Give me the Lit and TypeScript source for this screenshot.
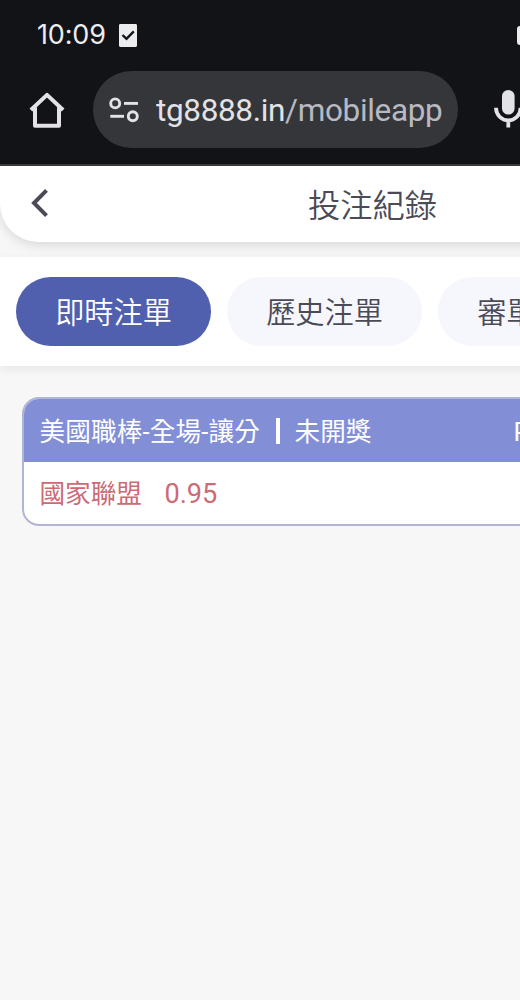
import { LitElement, html, css } from "lit";
import { customElement, state } from "lit/decorators.js";

const homeIcon = html`<svg width="36" height="36" viewBox="0 0 36 36" fill="none" stroke="#e3e3e7" stroke-width="4" stroke-linecap="round" stroke-linejoin="round">
  <path d="M1.9 18 18 2.9 34.1 18" stroke-linecap="butt" stroke-linejoin="round"/>
  <path d="M6 16V33.7H30V16"/>
</svg>`;

const tuneIcon = html`<svg width="30" height="26" viewBox="0 0 30 26" fill="none" stroke="#e3e3e7" stroke-width="2.9">
  <circle cx="6.2" cy="6.4" r="4.5"/><path d="M15 6.4H29"/>
  <circle cx="23.8" cy="19.3" r="4.5"/><path d="M1.3 19.3H15"/>
</svg>`;

const micIcon = html`<svg width="30" height="40" viewBox="0 0 30 40">
  <rect x="8" y="0" width="12.6" height="24.6" rx="6.3" fill="#e3e3e7"/>
  <path d="M2 17.8a12.3 12.6 0 0 0 24.6 0M14.3 29.5v8" fill="none" stroke="#e3e3e7" stroke-width="3.8"/>
</svg>`;

const noticeIcon = html`<svg width="18" height="23" viewBox="0 0 18 23">
  <rect width="18" height="23" rx="1.4" fill="#ececef"/>
  <path d="M3.5 11 7.5 14.8 14.8 7.4" fill="none" stroke="#121317" stroke-width="2.4"/>
</svg>`;

const backIcon = html`<svg width="18" height="30" viewBox="0 0 18 30">
  <path d="M15.5 2.4 3 15 15.5 27.6" fill="none" stroke="#4b4a57" stroke-width="4"/>
</svg>`;

@customElement("app-root")
export class AppRoot extends LitElement {
  @state() private active = 0;
  private tabs = ["即時注單", "歷史注單", "審單紀錄"];

  static styles = css`
    :host {
      display: block;
      width: 520px;
      height: 1000px;
      overflow: hidden;
      background: #f7f7f7;
      font-family: Roboto, "Noto Sans CJK TC", sans-serif;
    }
    * { box-sizing: border-box; }
    svg { display: block; flex: none; }
    .screen { width: 745px; }
    .browser {
      height: 166px;
      background: #121317;
      border-bottom: 2px solid #3b3b41;
    }
    .status {
      height: 71px;
      padding: 0 0 0 37px;
      display: flex;
      align-items: center;
      color: #ececef;
    }
    .clock {
      width: 82px;
      padding-bottom: 2px;
      font: 400 27px/34px Inter, sans-serif;
      letter-spacing: -0.15px;
    }
    .indicator {
      margin-left: 380px;
      width: 24px;
      height: 19px;
      border-radius: 3px;
      background: #ececef;
    }
    .toolbar { display: flex; align-items: center; height: 77px; padding-left: 29px; }
    .address {
      width: 365px;
      height: 77px;
      margin: 0 36px 0 28px;
      padding-left: 16px;
      border-radius: 39px;
      background: #35363a;
      display: flex;
      align-items: center;
    }
    .url {
      width: 286px;
      margin-left: 17px;
      padding-top: 3px;
      overflow: hidden;
      white-space: nowrap;
      font: 400 31.5px/44px Roboto, sans-serif;
      letter-spacing: -0.35px;
      color: #e3e3e7;
    }
    .path { color: #b9b9c1; }
    .titlebar {
      height: 76px;
      display: grid;
      grid-template-columns: 64px 1fr 64px;
      align-items: center;
      padding-bottom: 2px;
      background: #fff;
      border-radius: 0 0 38px 38px;
      box-shadow: 0 3px 12px rgba(0, 0, 0, 0.13);
    }
    .back { padding-left: 31px; }
    .title {
      padding-top: 6px;
      text-align: center;
      font-size: 32.3px;
      line-height: 48px;
      font-weight: 350;
      color: #4b4a57;
    }
    .tabs {
      height: 109px;
      margin-top: 15px;
      padding: 0 16px;
      display: flex;
      align-items: center;
      gap: 16px;
      background: #fff;
      position: relative;
      box-shadow: 0 3px 10px rgba(0, 0, 0, 0.07);
    }
    .tab {
      flex: none;
      width: 195px;
      height: 69px;
      padding: 2px 0 0;
      border: 0;
      border-radius: 35px;
      background: #f6f7fc;
      color: #4b4a57;
      font: 350 29.2px/44px Roboto, "Noto Sans CJK TC", sans-serif;
    }
    .tab.active { background: #505fae; color: #fff; }
    .ticket {
      margin: 31px 22px 0;
      height: 129px;
      border: 2px solid #b0b5d4;
      border-radius: 17px;
      background: #fff;
      overflow: hidden;
      font-size: 25.6px;
      line-height: 38px;
      font-weight: 400;
    }
    .head {
      height: 63px;
      padding: 2px 16px 0 15.5px;
      display: flex;
      align-items: center;
      background: #828fd6;
      color: #fff;
    }
    .league { letter-spacing: 0.17px; }
    .divider { width: 4px; height: 26px; margin: -2px 15px 0 15.5px; background: #fff; }
    .number { margin-left: 142px; }
    .pick {
      height: 63px;
      padding-left: 15.5px;
      display: flex;
      align-items: center;
      gap: 22.5px;
      color: #cc6a75;
    }
    .odds { font-size: 27.2px; }
  `;

  render() {
    return html`
      <div class="screen">
        <div class="browser">
          <div class="status">
            <span class="clock">10:09</span>${noticeIcon}
            <span class="indicator"></span>
          </div>
          <div class="toolbar">
            ${homeIcon}
            <div class="address">
              ${tuneIcon}
              <div class="url"><span class="host">tg8888.in</span><span class="path">/mobileapp/</span></div>
            </div>
            ${micIcon}
          </div>
        </div>
        <header class="titlebar">
          <span class="back">${backIcon}</span>
          <span class="title">投注紀錄</span>
        </header>
        <nav class="tabs">
          ${this.tabs.map((label, i) => html`<button
            class="tab ${i === this.active ? "active" : ""}"
            @click=${() => (this.active = i)}>${label}</button>`)}
        </nav>
        <article class="ticket">
          <div class="head">
            <span class="league">美國職棒-全場-讓分</span><i class="divider"></i><span>未開獎</span>
            <span class="number">P</span>
          </div>
          <div class="pick"><span>國家聯盟</span><span class="odds">0.95</span></div>
        </article>
      </div>
    `;
  }
}
